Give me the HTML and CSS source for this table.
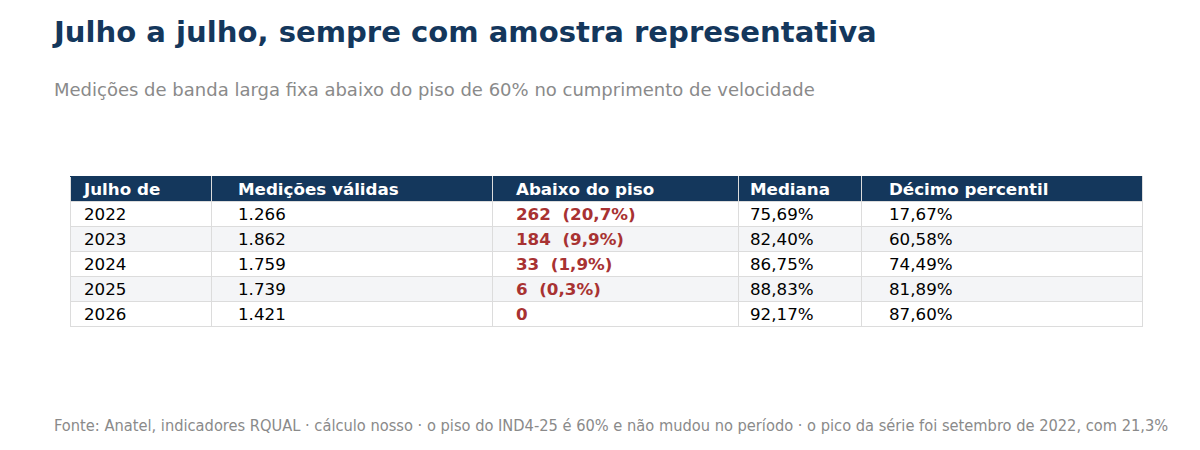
FILE: index.html
```html
<!DOCTYPE html>
<html lang="pt">
<head>
<meta charset="utf-8">
<link rel="stylesheet" href="styles.css">
</head>
<body>
<div class="page">
  <h1 class="title">Julho a julho, sempre com amostra representativa</h1>
  <p class="subtitle">Medições de banda larga fixa abaixo do piso de 60% no cumprimento de velocidade</p>
  <table class="data">
    <colgroup>
      <col class="w1"><col class="w2"><col class="w3"><col class="w4"><col class="w5">
    </colgroup>
    <thead>
      <tr>
        <th class="c1">Julho de</th>
        <th class="c2">Medições válidas</th>
        <th class="c3">Abaixo do piso</th>
        <th class="c4">Mediana</th>
        <th class="c5">Décimo percentil</th>
      </tr>
    </thead>
    <tbody>
      <tr><td class="c1">2022</td><td class="c2">1.266</td><td class="c3 bad">262  (20,7%)</td><td class="c4">75,69%</td><td class="c5">17,67%</td></tr>
      <tr><td class="c1">2023</td><td class="c2">1.862</td><td class="c3 bad">184  (9,9%)</td><td class="c4">82,40%</td><td class="c5">60,58%</td></tr>
      <tr><td class="c1">2024</td><td class="c2">1.759</td><td class="c3 bad">33  (1,9%)</td><td class="c4">86,75%</td><td class="c5">74,49%</td></tr>
      <tr><td class="c1">2025</td><td class="c2">1.739</td><td class="c3 bad">6  (0,3%)</td><td class="c4">88,83%</td><td class="c5">81,89%</td></tr>
      <tr><td class="c1">2026</td><td class="c2">1.421</td><td class="c3 bad">0</td><td class="c4">92,17%</td><td class="c5">87,60%</td></tr>
    </tbody>
  </table>
  <p class="source">Fonte: Anatel, indicadores RQUAL · cálculo nosso · o piso do IND4-25 é 60% e não mudou no período · o pico da série foi setembro de 2022, com 21,3%</p>
</div>
</body>
</html>
```

FILE: styles.css
```css
html, body {
  margin: 0;
  padding: 0;
  background: #ffffff;
}
.page {
  width: 1200px;
  height: 450px;
  font-family: "DejaVu Sans", sans-serif;
  padding: 0 0 0 54px;
  box-sizing: border-box;
  display: flex;
  flex-direction: column;
}
.title {
  margin: 13px 0 0 0;
  font-size: 29.1px;
  line-height: 38px;
  font-weight: bold;
  color: #14375c;
}
.subtitle {
  margin: 28px 0 0 0;
  font-size: 18px;
  line-height: 22px;
  color: #8a8a8a;
}
.data {
  margin: 75px 0 0 16px;
  width: 1072px;
  border-collapse: collapse;
  font-size: 16.7px;
  table-layout: fixed;
}
.w1 { width: 141px; }
.w2 { width: 281px; }
.w3 { width: 246px; }
.w4 { width: 123px; }
.w5 { width: 281px; }
.data th, .data td {
  height: 24px;
  padding: 0;
  border: 1px solid #dcdcdc;
  text-align: left;
  white-space: pre;
  line-height: 22px;
  overflow: hidden;
}
.data th {
  background: #14375c;
  color: #ffffff;
  font-weight: bold;
}
.data thead th {
  border-top-color: #14375c;
}
.data tbody tr:nth-child(even) td {
  background: #f4f5f7;
}
.data td { color: #000000; }
.data .c1 { padding-left: 13px; }
.data .c2 { padding-left: 26px; }
.data .c3 { padding-left: 23px; }
.data .c4 { padding-left: 11px; }
.data .c5 { padding-left: 27px; }
.data td.bad {
  color: #a83232;
  font-weight: bold;
}
.source {
  margin: auto 0 14px 0;
  font-family: "DejaVu Sans Condensed", "DejaVu Sans", sans-serif;
  font-size: 16.3px;
  line-height: 20px;
  color: #8a8a8a;
  white-space: nowrap;
}
```
